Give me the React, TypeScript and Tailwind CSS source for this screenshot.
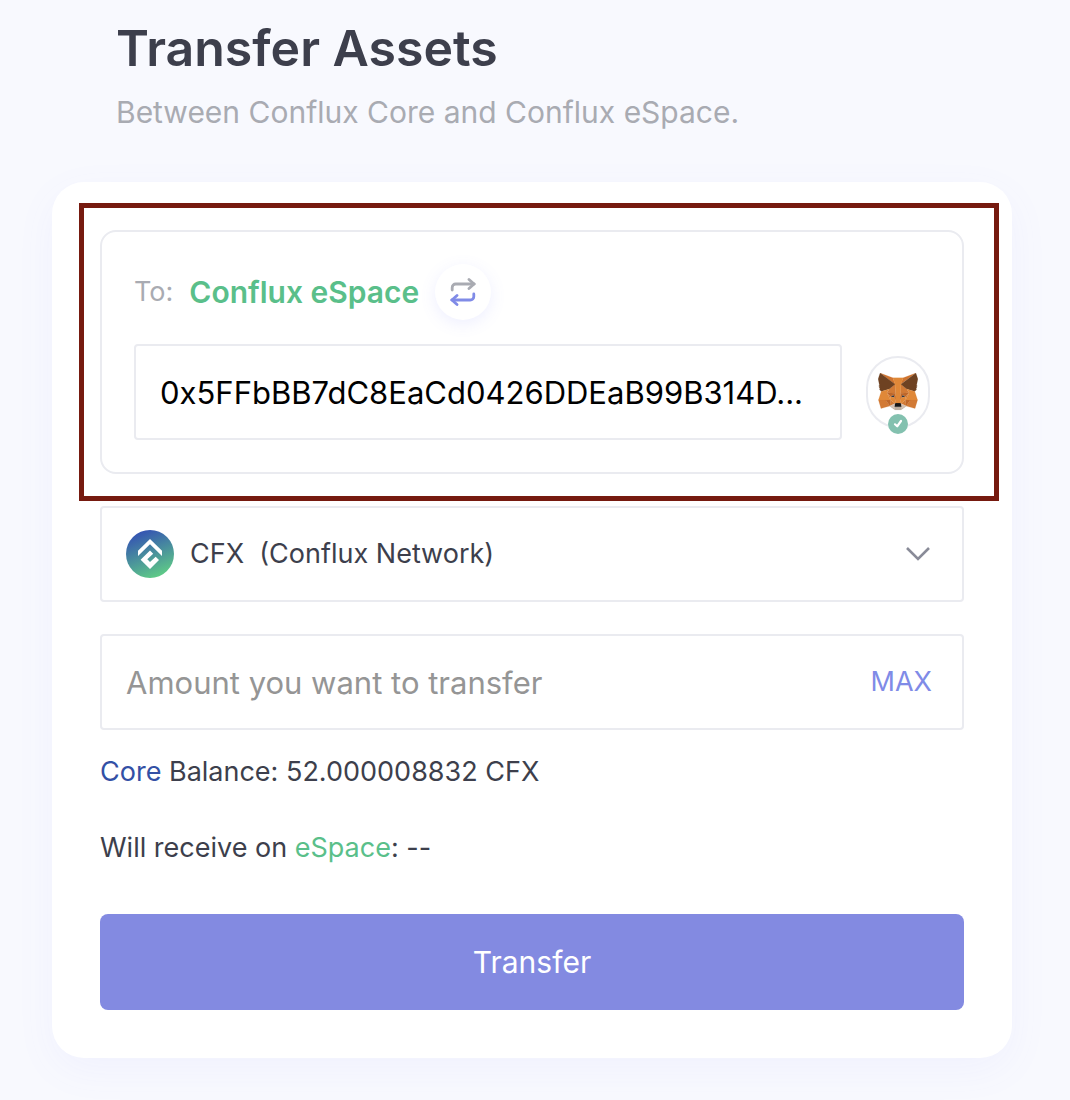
import { useState } from "react";

function SwapIcon() {
  return (
    <svg viewBox="0 0 28 28" className="size-7" fill="none" strokeWidth="2.8" strokeLinecap="round" aria-hidden="true">
      <g stroke="#a9abb2">
        <path d="M3.200 12V9.500A3.500 3.500 0 0 1 6.700 6H25" />
        <path d="M20 1.500L25 6L20 10.500" />
      </g>
      <g stroke="#808be7">
        <path d="M24.800 16V18.500A3.500 3.500 0 0 1 21.300 22H3" />
        <path d="M8 17.500L3 22L8 26.500" />
      </g>
    </svg>
  );
}

const FOX: [string, string][] = [
  ["#cf7430", "274.1,35.5 174.6,109.4 193,65.8"],
  ["#cf7430", "44.4,35.5 143.1,110.1 125.6,65.8"],
  ["#d27a35", "238.3,206.8 211.8,247.4 268.5,263 284.8,207.7"],
  ["#d27a35", "33.9,207.7 50.1,263 106.8,247.4 80.3,206.8"],
  ["#d27a35", "103.6,138.2 87.8,162.1 144.1,164.6 142.1,104.1"],
  ["#d27a35", "214.9,138.2 175.9,103.4 174.6,164.6 230.8,162.1"],
  ["#d27a35", "106.8,247.4 140.6,230.9 111.4,208.1"],
  ["#d27a35", "177.9,230.9 211.8,247.4 207.1,208.1"],
  ["#d4c2b5", "211.8,247.4 177.9,230.9 180.6,253 180.3,262.3"],
  ["#d4c2b5", "106.8,247.4 138.3,262.3 138.1,253 140.6,230.9"],
  ["#263446", "138.8,193.5 110.6,185.2 130.5,176.1"],
  ["#263446", "179.7,193.5 188,176.1 208,185.2"],
  ["#be672a", "106.8,247.4 111.6,206.8 80.3,207.7"],
  ["#be672a", "207,206.8 211.8,247.4 238.3,207.7"],
  ["#be672a", "230.8,162.1 174.6,164.6 179.8,193.5 188.1,176.1 208.1,185.2"],
  ["#be672a", "110.6,185.2 130.6,176.1 138.8,193.5 144.1,164.6 87.8,162.1"],
  ["#d27a35", "87.8,162.1 111.4,208.1 110.6,185.2"],
  ["#d27a35", "208.1,185.2 207.1,208.1 230.8,162.1"],
  ["#d27a35", "144.1,164.6 138.8,193.5 145.4,227.6 146.9,182.7"],
  ["#d27a35", "174.6,164.6 171.9,182.6 173.1,227.6 179.8,193.5"],
  ["#e08838", "179.8,193.5 173.1,227.6 177.9,230.9 207.1,208.1 208.1,185.2"],
  ["#e08838", "110.6,185.2 111.4,208.1 140.6,230.9 145.4,227.6 138.8,193.5"],
  ["#bdae9f", "180.3,262.3 180.6,253 178.1,250.8 140.4,250.8 138.1,253 138.3,262.3 106.8,247.4 117.8,256.4 140.1,271.9 178.4,271.9 200.8,256.4 211.8,247.4"],
  ["#161616", "177.9,230.9 173.1,227.6 145.4,227.6 140.6,230.9 138.1,253 140.4,250.8 178.1,250.8 180.6,253"],
  ["#6e4222", "278.3,114.2 286.8,73.4 274.1,35.5 177.9,106.9 214.9,138.2 267.2,153.5 278.8,140 273.8,136.4 281.8,129.1 275.6,124.3 283.6,118.2"],
  ["#6e4222", "31.8,73.4 40.3,114.2 34.9,118.2 42.9,124.3 36.8,129.1 44.8,136.4 39.8,140 51.3,153.5 103.6,138.2 140.6,106.9 44.4,35.5"],
  ["#e08838", "267.2,153.5 214.9,138.2 230.8,162.1 207.1,208.1 238.3,207.7 284.8,207.7"],
  ["#e08838", "103.6,138.2 51.3,153.5 33.9,207.7 80.3,207.7 111.4,208.1 87.8,162.1"],
  ["#e08838", "174.6,164.6 177.9,106.9 193.1,65.8 125.6,65.8 140.6,106.9 144.1,164.6 145.3,182.8 145.4,227.6 173.1,227.6 173.3,182.8"],
];

function FoxIcon() {
  return (
    <svg viewBox="31 35 256.500 237.500" className="w-10" aria-hidden="true">
      {FOX.map(([fill, points]) => (
        <polygon key={points} fill={fill} stroke={fill} strokeWidth="1" points={points} />
      ))}
    </svg>
  );
}

function CfxLogo() {
  return (
    <svg viewBox="0 0 48 48" className="size-12 shrink-0" aria-hidden="true">
      <defs>
        <linearGradient id="cfx" x1="0.3" y1="0" x2="0.7" y2="1">
          <stop offset="0" stopColor="#3350b4" />
          <stop offset="1" stopColor="#60cf85" />
        </linearGradient>
      </defs>
      <circle cx="24" cy="24" r="24" fill="url(#cfx)" />
      <g fill="#fff">
        <path d="M24 9L36 20.700V26L24 14.300L12 26V20.700Z" />
        <path d="M24 20.500L27.200 23.700L21.300 29.300L24 32L29.700 26.700L33 30L24 39L14.600 29.700Z" />
      </g>
    </svg>
  );
}

export default function App() {
  const [address, setAddress] = useState("0x5FFbBB7dC8EaCd0426DDEaB99B314D...");
  const [amount, setAmount] = useState("");

  return (
    <main className="min-h-screen bg-[#f8f9fe] pt-4 pr-[58px] pb-10 pl-[52px] font-['Inter',sans-serif] text-[#3d3f4c]">
      <header className="px-16">
        <h1 className="text-[50px] leading-16 font-semibold">Transfer Assets</h1>
        <p className="mt-3 text-[30px] leading-10 text-[#a9abb2]">Between Conflux Core and Conflux eSpace.</p>
      </header>

      <form
        onSubmit={(e) => e.preventDefault()}
        className="mt-[50px] rounded-[32px] bg-white p-12 text-[27px] leading-9 shadow-[0_12px_40px_rgba(112,126,255,0.06)]"
      >
        <div className="relative">
          <section className="rounded-2xl border-2 border-[#eaebf0] p-8">
            <div className="flex items-center">
              <span className="text-[#a9abb2]">To:</span>
              <span className="ml-4 text-[30px] font-semibold text-[#5abf8a]">Conflux eSpace</span>
              <button
                type="button"
                aria-label="Switch direction"
                className="ml-4 flex size-14 items-center justify-center rounded-full bg-white shadow-[0_4px_16px_rgba(112,126,255,0.12)]"
              >
                <SwapIcon />
              </button>
            </div>
            <div className="mt-6 flex items-center gap-6">
              <input
                type="text"
                aria-label="Destination address"
                value={address}
                onChange={(e) => setAddress(e.target.value)}
                className="h-24 min-w-0 flex-1 rounded-sm border-2 border-[#eaebf0] px-6 text-[31px] text-black outline-none"
              />
              <button
                type="button"
                aria-label="MetaMask connected"
                className="relative flex h-[72px] w-16 items-center justify-center rounded-full border-2 border-[#eaebf0]"
              >
                <FoxIcon />
                <span className="absolute -bottom-2 flex size-5 items-center justify-center rounded-full bg-[#83c1af]">
                  <svg viewBox="0 0 20 20" className="size-5" fill="none" stroke="#fff" strokeWidth="2.2" strokeLinecap="round" strokeLinejoin="round" aria-hidden="true">
                    <path d="M7 10.300L9.200 12.300L13 7" />
                  </svg>
                </span>
              </button>
            </div>
          </section>
          <div className="pointer-events-none absolute -top-[27px] -right-[35px] -bottom-[27px] -left-[21px] border-5 border-[#761a0f]" />
        </div>

        <div className="relative mt-8 flex h-24 items-center rounded-sm border-2 border-[#eaebf0] px-6">
          <CfxLogo />
          <select aria-label="Token" className="ml-4 h-full min-w-0 flex-1 appearance-none bg-transparent outline-none">
            <option>CFX{"\u00a0\u00a0"}(Conflux Network)</option>
          </select>
          <svg viewBox="0 0 24 14" className="pointer-events-none absolute right-8 w-6" fill="none" stroke="#898b98" strokeWidth="2.6" aria-hidden="true">
            <path d="M1 1L12 12L23 1" />
          </svg>
        </div>

        <div className="mt-8 flex h-24 items-center rounded-sm border-2 border-[#eaebf0] pr-[30px] pl-6">
          <input
            type="text"
            aria-label="Amount"
            placeholder="Amount you want to transfer"
            value={amount}
            onChange={(e) => setAmount(e.target.value)}
            className="h-full min-w-0 flex-1 text-[31px] outline-none placeholder:text-[#959595]"
          />
          <button type="button" className="text-[#808be7]">MAX</button>
        </div>

        <p className="mt-6">
          <span className="text-[#3350a5]">Core</span> Balance: 52.000008832 CFX
        </p>
        <p className="mt-10">
          Will receive on <span className="text-[#5abf8a]">eSpace</span>: --
        </p>
        <button type="submit" className="mt-12 h-24 w-full rounded-lg bg-[#838ae1] text-[30px] text-white">
          Transfer
        </button>
      </form>
    </main>
  );
}
